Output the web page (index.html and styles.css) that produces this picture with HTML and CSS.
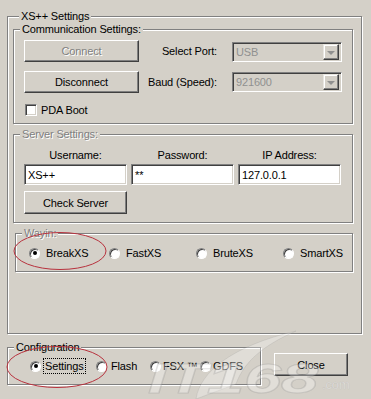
FILE: index.html
```html
<!DOCTYPE html>
<html>
<head>
<meta charset="utf-8">
<link rel="stylesheet" href="styles.css">
</head>
<body>
<div class="dialog">
  <div class="grp outer">
    <div class="legend">XS++ Settings</div>
    <div class="grp comm">
      <div class="legend">Communication Settings:</div>
      <div class="comm-grid">
        <button class="btn dis">Connect</button>
        <span class="lbl">Select Port:</span>
        <div class="combo c1"><span class="val">USB</span><span class="arr"></span></div>
        <button class="btn">Disconnect</button>
        <span class="lbl">Baud (Speed):</span>
        <div class="combo"><span class="val">921600</span><span class="arr"></span></div>
        <label class="chk"><span class="box"></span>PDA Boot</label>
      </div>
    </div>
    <div class="grp server">
      <div class="legend grey">Server Settings:</div>
      <div class="srv-grid">
        <span class="cap">Username:</span>
        <span class="cap">Password:</span>
        <span class="cap">IP Address:</span>
        <div class="field">XS++</div>
        <div class="field">**</div>
        <div class="field">127.0.0.1</div>
        <button class="btn check">Check Server</button>
      </div>
    </div>
    <div class="grp wayin">
      <div class="legend grey">Wayin:</div>
      <div class="radios wayin-radios">
        <span class="opt"><span class="radio on"></span>BreakXS</span>
        <span class="opt"><span class="radio"></span>FastXS</span>
        <span class="opt"><span class="radio"></span>BruteXS</span>
        <span class="opt"><span class="radio"></span>SmartXS</span>
      </div>
    </div>
  </div>
  <div class="bottom">
    <div class="grp config">
      <div class="legend">Configuration</div>
      <div class="radios cfg-radios">
        <span class="opt"><span class="radio on"></span><span class="focus">Settings</span></span>
        <span class="opt"><span class="radio"></span>Flash</span>
        <span class="opt"><span class="radio"></span>FSX ™</span>
        <span class="opt"><span class="radio"></span>GDFS</span>
      </div>
    </div>
    <button class="btn close">Close</button>
  </div>

  <svg class="marks" width="371" height="399" viewBox="0 0 371 399">
    <ellipse cx="60" cy="251" rx="46" ry="18.5" fill="none" stroke="#b8323e" stroke-width="1"/>
    <ellipse cx="57" cy="367" rx="50" ry="20.5" fill="none" stroke="#b8323e" stroke-width="1"/>
  </svg>

  <svg class="wm" width="371" height="399" viewBox="0 0 371 399">
    <path d="M196 399 C200 372 232 346 296 331 C262 346 244 362 236 384 Z" fill="rgba(255,255,255,0.28)" stroke="rgba(140,140,140,0.18)" stroke-width="1"/>
    <text x="148" y="393" font-family="Liberation Sans, sans-serif" font-size="42" font-weight="bold" font-style="italic" textLength="170" lengthAdjust="spacingAndGlyphs" fill="rgba(255,255,255,0.3)" stroke="rgba(120,120,120,0.22)" stroke-width="1">IT168</text>
    <text x="322" y="389" font-family="Liberation Sans, sans-serif" font-size="13" fill="rgba(255,255,255,0.45)" stroke="rgba(130,130,130,0.22)" stroke-width="0.6">.com</text>
  </svg>
</div>
</body>
</html>
```
FILE: styles.css
```css
* { box-sizing: border-box; }
html, body { margin: 0; padding: 0; }
body {
  background: #d4d0c8;
  font-family: "Liberation Sans", Arial, sans-serif;
  font-size: 11px;
  letter-spacing: -0.15px;
  color: #000;
}
.dialog {
  position: relative;
  width: 371px;
  height: 399px;
  overflow: hidden;
  background: #d4d0c8;
  padding-top: 16px;
}
.grp {
  border: 1px solid #808080;
  box-shadow: inset 1px 1px 0 #fff, 1px 1px 0 #fff;
}
.legend {
  display: table;
  margin: -8px 0 0 6px;
  padding: 0 2px;
  line-height: 14px;
  height: 14px;
  background: #d4d0c8;
  white-space: nowrap;
}
.legend.grey {
  color: #808080;
  text-shadow: 1px 1px 0 #fff;
}
.outer {
  margin-left: 7px;
  width: 355px;
  height: 318px;
  padding: 0 0 0 5px;
}
.comm {
  margin-top: 6px;
  width: 340px;
  height: 95px;
}
.comm-grid {
  display: grid;
  grid-template-columns: 115px 93px 110px;
  grid-template-rows: 22px 22px auto;
  row-gap: 9px;
  margin: 4px 0 0 10px;
  align-items: center;
}
.lbl {
  text-align: right;
  padding-right: 15px;
  white-space: nowrap;
}
.btn {
  font: inherit;
  letter-spacing: inherit;
  color: #000;
  background: #d4d0c8;
  border: 1px solid;
  border-color: #fff #404040 #404040 #fff;
  box-shadow: inset -1px -1px 0 #808080;
  padding: 0;
  margin: 0;
  height: 22px;
  width: 100%;
  text-align: center;
}
.btn.dis {
  color: #808080;
  text-shadow: 1px 1px 0 #fff;
}
.combo {
  height: 20px;
  display: flex;
  align-items: center;
  background: #d4d0c8;
  border: 1px solid;
  border-color: #808080 #fff #fff #808080;
  box-shadow: inset 1px 1px 0 #404040, inset -1px -1px 0 #d4d0c8;
  padding: 2px 2px 2px 3px;
  color: #909090;
}
.combo.c1 { align-self: end; }
.combo .val { flex: 1; }
.combo .arr {
  width: 16px;
  height: 16px;
  background: #d4d0c8;
  border: 1px solid;
  border-color: #e8e6e0 #404040 #404040 #e8e6e0;
  box-shadow: inset -1px -1px 0 #808080, inset 1px 1px 0 #fff;
  display: flex;
  align-items: center;
  justify-content: center;
}
.combo .arr::after {
  content: "";
  width: 0;
  height: 0;
  border-left: 4px solid transparent;
  border-right: 4px solid transparent;
  border-top: 4px solid #909090;
  margin-top: 1px;
}
.chk {
  grid-column: 1 / 3;
  display: flex;
  align-items: center;
  gap: 4px;
  margin: 2px 0 0 1px;
}
.box {
  width: 12px;
  height: 12px;
  background: #fff;
  border: 1px solid;
  border-color: #808080 #fff #fff #808080;
  box-shadow: inset 1px 1px 0 #404040, inset -1px -1px 0 #d4d0c8;
}
.server {
  margin-top: 10px;
  width: 340px;
  height: 89px;
}
.srv-grid {
  display: grid;
  grid-template-columns: 103px 103px 103px;
  column-gap: 4px;
  margin: 8px 0 0 10px;
}
.cap {
  text-align: center;
  line-height: 13px;
}
.field {
  margin-top: 2px;
  height: 21px;
  background: #fff;
  border: 1px solid;
  border-color: #808080 #fff #fff #808080;
  box-shadow: inset 1px 1px 0 #404040, inset -1px -1px 0 #d4d0c8;
  padding: 3px 0 0 3px;
  line-height: 14px;
}
.btn.check {
  margin-top: 6px;
  height: 23px;
}
.wayin {
  margin: 10px 0 0 2px;
  width: 338px;
  height: 39px;
}
.radios {
  display: flex;
  align-items: center;
  line-height: 14px;
}
.opt {
  display: flex;
  align-items: center;
  gap: 6px;
  white-space: nowrap;
}
.radio {
  width: 11px;
  height: 11px;
  border-radius: 50%;
  background: #fff;
  border: 1px solid;
  border-color: #808080 #fff #fff #808080;
  box-shadow: inset 1px 1px 0 #404040;
  display: flex;
  align-items: center;
  justify-content: center;
  flex: none;
}
.radio.on::after {
  content: "";
  width: 4px;
  height: 4px;
  border-radius: 50%;
  background: #000;
}
.wayin-radios {
  margin: 6px 0 0 13px;
}
.wayin-radios .opt:nth-child(1) { width: 80px; }
.wayin-radios .opt:nth-child(2) { width: 87px; }
.wayin-radios .opt:nth-child(3) { width: 87px; }
.bottom {
  display: flex;
  align-items: flex-start;
  margin: 13px 0 0 7px;
}
.config {
  width: 254px;
  height: 38px;
}
.cfg-radios {
  margin: 5px 0 0 22px;
}
.cfg-radios .opt:nth-child(1) { width: 66px; gap: 3px; }
.cfg-radios .opt:nth-child(2) { width: 54px; gap: 4px; }
.cfg-radios .opt:nth-child(3) { width: 50px; gap: 2px; }
.cfg-radios .opt:nth-child(4) { gap: 2px; }
.focus {
  outline: 1px dotted #000;
  outline-offset: 0;
  padding: 0 1px;
}
.btn.close {
  width: 74px;
  height: 23px;
  margin: 6px 0 0 13px;
}
.marks, .wm {
  position: absolute;
  left: 0;
  top: 0;
  pointer-events: none;
}
```
